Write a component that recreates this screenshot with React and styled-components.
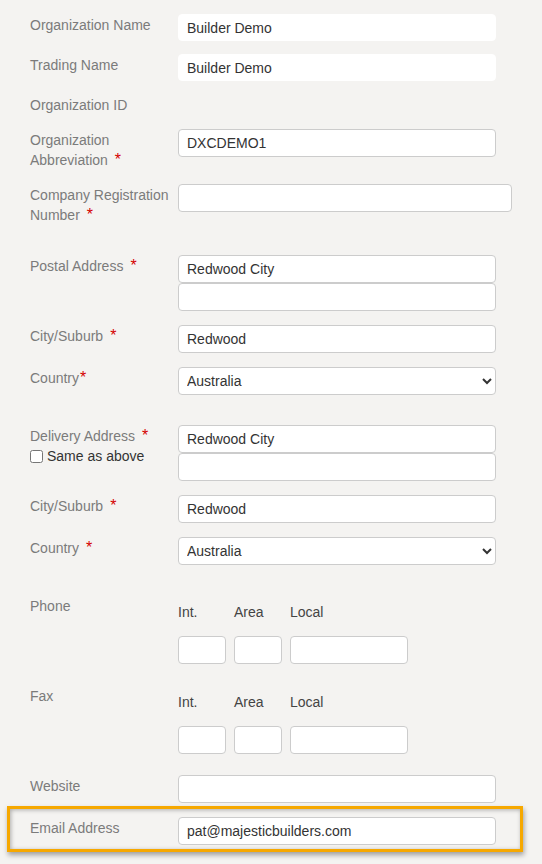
import styled, { createGlobalStyle } from "styled-components";

const GlobalStyle = createGlobalStyle`
  html, body {
    margin: 0;
    padding: 0;
    background: #f4f3f1;
  }
  body {
    font-family: "Liberation Sans", Arial, sans-serif;
    font-size: 14px;
  }
`;

const Form = styled.form`
  width: 542px;
  height: 864px;
  box-sizing: border-box;
  padding: 0 0 0 30px;
  overflow: hidden;
`;

const Row = styled.div`
  display: grid;
  grid-template-columns: 148px 1fr;
  align-items: start;
  margin-top: ${(p) => p.$mt || 14}px;
`;

const Label = styled.div`
  padding-top: 1px;
  padding-right: 4px;
  line-height: 20px;
  color: #7b7b7b;
`;

const Req = styled.span`
  display: inline-block;
  color: #d40000;
  font-size: 16px;
  line-height: 14px;
  margin-left: ${(p) => (p.$tight ? 1 : 7)}px;
`;

const Field = styled.div`
  display: flex;
  flex-direction: column;
  padding-top: ${(p) => p.$pt || 0}px;
`;

const Input = styled.input`
  box-sizing: border-box;
  width: ${(p) => p.$w || 318}px;
  height: ${(p) => (p.$plain ? 27 : 28)}px;
  margin: 0;
  padding: 0 8px;
  border: 1px solid ${(p) => (p.$plain ? "#ffffff" : "#cccccc")};
  border-radius: 4px;
  background: #fff;
  font-family: "Liberation Sans", Arial, sans-serif;
  font-size: 14px;
  color: #333;
  outline: none;
`;

const Select = styled.select`
  box-sizing: border-box;
  width: 318px;
  height: 28px;
  margin: 0;
  padding: 0 4px;
  border: 1px solid #cccccc;
  border-radius: 4px;
  background: #fff;
  font-family: "Liberation Sans", Arial, sans-serif;
  font-size: 14px;
  color: #333;
  outline: none;
`;

const CheckLine = styled.label`
  display: flex;
  align-items: center;
  gap: 4px;
  line-height: 20px;
  color: #333;
`;

const Check = styled.input`
  width: 13px;
  height: 13px;
  margin: 0;
`;

const PhoneGrid = styled.div`
  display: grid;
  grid-template-columns: 48px 48px 118px;
  column-gap: 8px;
  row-gap: 14px;
`;

const SubLabel = styled.span`
  line-height: 20px;
  color: #444;
`;

const Highlight = styled.div`
  display: grid;
  grid-template-columns: 148px 1fr;
  align-items: start;
  width: 516px;
  box-sizing: border-box;
  margin: 3px 0 0 -23px;
  padding: 8px 0 4px 20px;
  border: 3px solid #f6a800;
  box-shadow: 1px 3px 5px rgba(0, 0, 0, 0.35),
    inset 1px 1px 4px rgba(0, 0, 0, 0.3);
`;

function PhoneField({ pt }) {
  return (
    <Field $pt={pt}>
      <PhoneGrid>
        <SubLabel>Int.</SubLabel>
        <SubLabel>Area</SubLabel>
        <SubLabel>Local</SubLabel>
        <Input $w={48} />
        <Input $w={48} />
        <Input $w={118} />
      </PhoneGrid>
    </Field>
  );
}

export default function App() {
  return (
    <>
      <GlobalStyle />
      <Form onSubmit={(e) => e.preventDefault()}>
        <Row $mt={14}>
          <Label>Organization Name</Label>
          <Input $plain defaultValue="Builder Demo" />
        </Row>
        <Row $mt={13}>
          <Label>Trading Name</Label>
          <Input $plain defaultValue="Builder Demo" />
        </Row>
        <Row $mt={13}>
          <Label>Organization ID</Label>
        </Row>
        <Row $mt={14}>
          <Label>
            Organization Abbreviation<Req>*</Req>
          </Label>
          <Input defaultValue="DXCDEMO1" />
        </Row>
        <Row $mt={14}>
          <Label>
            Company Registration Number<Req>*</Req>
          </Label>
          <Input $w={334} />
        </Row>

        <Row $mt={30}>
          <Label>
            Postal Address<Req>*</Req>
          </Label>
          <Field>
            <Input defaultValue="Redwood City" />
            <Input />
          </Field>
        </Row>
        <Row>
          <Label>
            City/Suburb<Req>*</Req>
          </Label>
          <Input defaultValue="Redwood" />
        </Row>
        <Row>
          <Label>
            Country<Req $tight>*</Req>
          </Label>
          <Select defaultValue="Australia">
            <option>Australia</option>
            <option>New Zealand</option>
          </Select>
        </Row>

        <Row $mt={30}>
          <Label>
            Delivery Address<Req>*</Req>
            <CheckLine>
              <Check type="checkbox" />
              Same as above
            </CheckLine>
          </Label>
          <Field>
            <Input defaultValue="Redwood City" />
            <Input />
          </Field>
        </Row>
        <Row>
          <Label>
            City/Suburb<Req>*</Req>
          </Label>
          <Input defaultValue="Redwood" />
        </Row>
        <Row>
          <Label>
            Country<Req>*</Req>
          </Label>
          <Select defaultValue="Australia">
            <option>Australia</option>
            <option>New Zealand</option>
          </Select>
        </Row>

        <Row $mt={30}>
          <Label>Phone</Label>
          <PhoneField pt={7} />
        </Row>
        <Row $mt={21}>
          <Label>Fax</Label>
          <PhoneField pt={7} />
        </Row>
        <Row $mt={21}>
          <Label>Website</Label>
          <Input />
        </Row>
        <Highlight>
          <Label>Email Address</Label>
          <Input defaultValue="pat@majesticbuilders.com" />
        </Highlight>
      </Form>
    </>
  );
}
